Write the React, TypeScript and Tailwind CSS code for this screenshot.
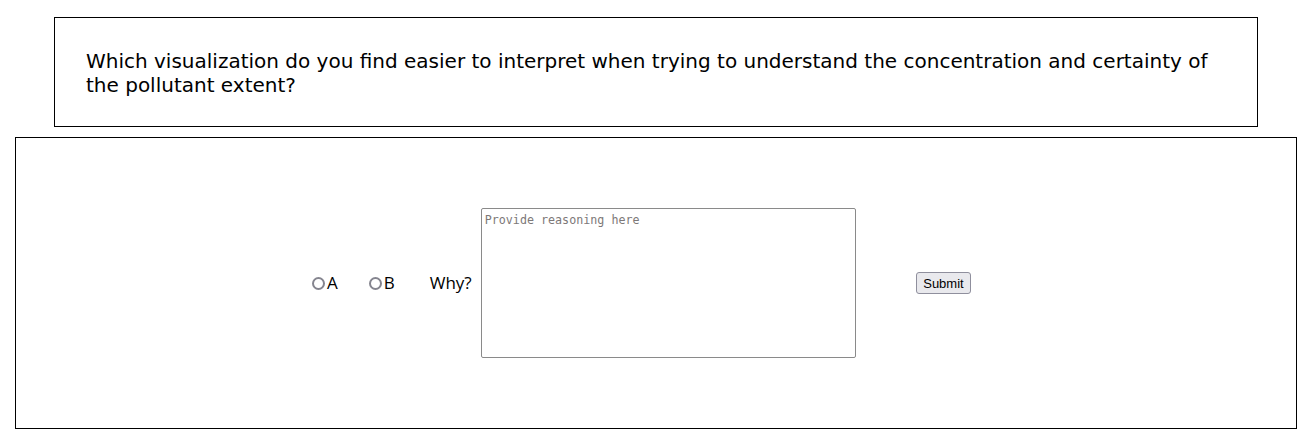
import React from "react";

export default function App() {
  return (
    <div className="w-[1316px] h-[442px] bg-white overflow-hidden">
      <div className="pt-[17px]">
        <div className="ml-[54px] w-[1204px] h-[110px] border border-black px-[31px] pt-[31px] text-black" style={{ fontFamily: '"DejaVu Sans", Verdana, sans-serif' }}>
          <p className="text-[20px] leading-[24px]">Which visualization do you find easier to interpret when trying to understand the concentration and certainty of the pollutant extent?</p>
        </div>
        <div className="ml-[15px] mt-[10px] w-[1282px] h-[292px] border border-black flex items-center pl-[296px]" style={{ fontFamily: '"Open Sans", "Noto Sans", Arial, sans-serif' }}>
          <label className="flex items-center text-[17px] text-black">
            <input type="radio" name="choice" className="appearance-none m-0 w-[13px] h-[13px] rounded-full border-2 border-[#85858f] bg-white" />
            <span className="ml-[2px]">A</span>
          </label>
          <label className="flex items-center text-[17px] text-black ml-[31px]">
            <input type="radio" name="choice" className="appearance-none m-0 w-[13px] h-[13px] rounded-full border-2 border-[#85858f] bg-white" />
            <span className="ml-[2px]">B</span>
          </label>
          <span className="ml-[35px] text-[17px] text-black">Why?</span>
          <textarea
            placeholder="Provide reasoning here"
            className="ml-[9px] w-[375px] h-[150px] border border-[#8a8a8a] rounded-[2px] px-[3px] pt-[4px] pb-[3px] text-[11.7px] leading-[14px] resize-none placeholder:text-[#7d7878] outline-none"
            style={{ fontFamily: '"DejaVu Sans Mono", "Liberation Mono", monospace' }}
          />
          <button
            className="ml-[60px] h-[22px] px-[6.5px] border border-[#8f8f9d] rounded-[3px] bg-[#e9e9ed] text-[13px] text-black leading-none"
            style={{ fontFamily: '"Liberation Sans", Arial, sans-serif' }}
          >
            Submit
          </button>
        </div>
      </div>
    </div>
  );
}
